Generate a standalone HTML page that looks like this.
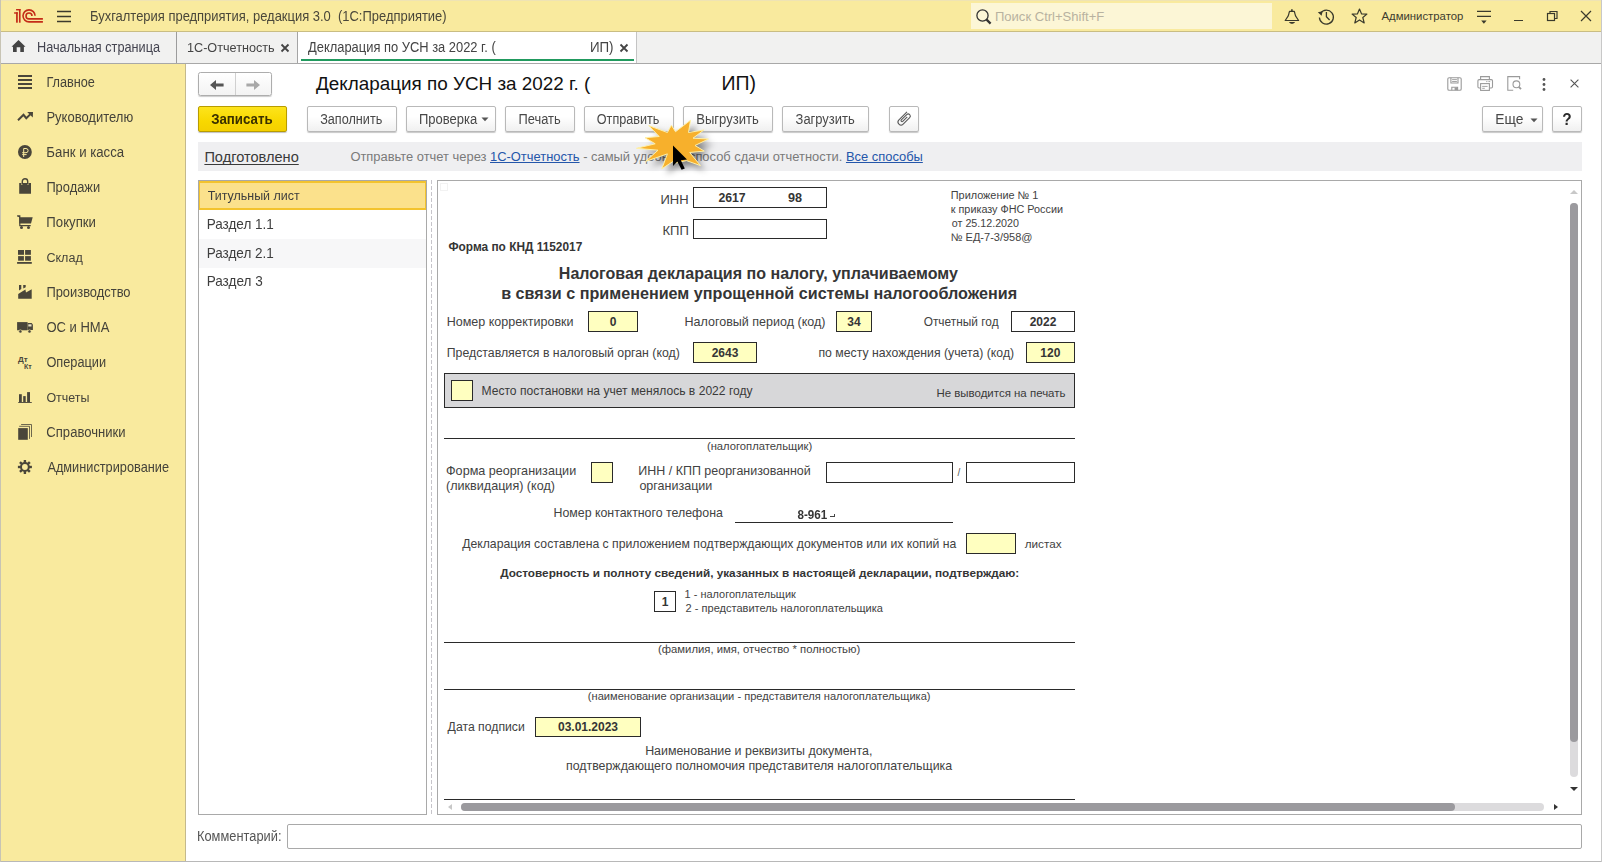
<!DOCTYPE html>
<html><head><meta charset="utf-8">
<style>
*{box-sizing:border-box;margin:0;padding:0}
html,body{width:1602px;height:862px;overflow:hidden;background:#fff;font-family:"Liberation Sans",sans-serif;color:#333}
.a{position:absolute}
.t{position:absolute;white-space:pre;line-height:1;font-family:"Liberation Sans",sans-serif}
svg.a{overflow:visible}
</style></head><body>
<div class="a" style="left:0px;top:0px;width:1602px;height:31px;background:#f9ea9e"></div>
<div class="a" style="left:0px;top:0px;width:1602px;height:1px;background:#efe3b4"></div>
<div class="a" style="left:0px;top:31px;width:1602px;height:1px;background:#c9bd83"></div>
<div class="a" style="left:0px;top:32px;width:1602px;height:31px;background:#f1f1f0"></div>
<div class="a" style="left:0px;top:63px;width:1602px;height:1px;background:#a8a8a8"></div>
<div class="a" style="left:0px;top:64px;width:185px;height:798px;background:#f9ea9e"></div>
<div class="a" style="left:185px;top:64px;width:1px;height:798px;background:#c4b98c"></div>
<div class="a" style="left:186px;top:64px;width:1415px;height:797px;background:#fff"></div>
<div class="a" style="left:0px;top:861px;width:1602px;height:1px;background:#b8b8b8"></div>
<div class="a" style="left:0px;top:0px;width:1px;height:862px;background:#c8c4b4"></div>
<div class="a" style="left:1601px;top:0px;width:1px;height:862px;background:#c8c8c8"></div>
<svg class="a" style="left:12px;top:6px;" width="34" height="20" viewBox="0 0 34 20"><g fill="#c42c18"><rect x="4.06" y="6.26" width="1.74" height="10.44"/><rect x="2.1" y="6.26" width="3.7" height="1.45"/><rect x="6.96" y="3" width="1.62" height="13.7"/><rect x="4.06" y="3" width="4.52" height="1.45"/></g>
<g fill="none" stroke="#c42c18" stroke-width="1.6"><path d="M23.06 9.87 A6.03 6.03 0 1 0 17.03 15.9 H30.9"/><path d="M19.97 9.93 A2.97 2.97 0 1 0 17 12.9 H30.9"/></g></svg>
<svg class="a" style="left:56px;top:10px;" width="16" height="13" viewBox="0 0 16 13"><g stroke="#3c3a2c" stroke-width="1.5"><path d="M1 1.5H15M1 6.5H15M1 11.5H15"/></g></svg>
<div class="t" style="left:90.00px;top:11.00px;font-size:12.968px;font-weight:400;color:#4a473a;transform:scaleY(1.08);transform-origin:0 10px;">Бухгалтерия предприятия, редакция 3.0  (1С:Предприятие)</div>
<div class="a" style="left:971px;top:3px;width:301px;height:26px;background:#fcf6d6"></div>
<svg class="a" style="left:975.3px;top:7.8px;" width="18" height="18" viewBox="0 0 18 18"><circle cx="7.5" cy="7.5" r="5.6" fill="none" stroke="#333" stroke-width="1.3"/><path d="M11.6 11.6 L15.6 15.6" stroke="#333" stroke-width="2.2"/></svg>
<div class="t" style="left:994.95px;top:10.00px;font-size:13.062px;font-weight:400;color:#b8b2a0;">Поиск Ctrl+Shift+F</div>
<svg class="a" style="left:1280px;top:5px;" width="24" height="22" viewBox="0 0 24 22"><path d="M11.9 4.2 V6.3" stroke="#3a3a2c" stroke-width="1.6"/><path d="M9.6 6.3 H14.2 C14.9 8 15.1 10 15.7 11.2 L18.6 15.5 H5.2 L8.1 11.2 C8.7 10 8.9 8 9.6 6.3Z" fill="none" stroke="#3a3a2c" stroke-width="1.2" stroke-linejoin="round"/><path d="M9 17 H15 C14.2 19.4 9.8 19.4 9 17Z" fill="#3a3a2c"/></svg>
<svg class="a" style="left:1317px;top:8px;" width="18" height="17" viewBox="0 0 18 17"><path d="M3.6 5.2 A7 7 0 1 1 2.4 9.5" fill="none" stroke="#3a3a2c" stroke-width="1.3"/><path d="M0.8 4.2 L5.6 3.2 L4.6 7.8Z" fill="#3a3a2c"/><path d="M9.4 4 V8.8 L12.6 12" fill="none" stroke="#3a3a2c" stroke-width="1.3"/></svg>
<svg class="a" style="left:1351px;top:8px;" width="17" height="16" viewBox="0 0 17 16"><path d="M8.5 1 L10.6 5.9 L15.9 6.1 L11.8 9.5 L13.2 14.9 L8.5 11.9 L3.8 14.9 L5.2 9.5 L1.1 6.1 L6.4 5.9Z" fill="none" stroke="#3a3a2c" stroke-width="1.2" stroke-linejoin="round"/></svg>
<div class="t" style="left:1381.50px;top:11.00px;font-size:11.354px;font-weight:400;color:#3e3c30;">Администратор</div>
<svg class="a" style="left:1476px;top:9px;" width="16" height="16" viewBox="0 0 16 16"><path d="M1 2.3H15M1 7.4H15" stroke="#3a3a2c" stroke-width="1.2"/><path d="M5.2 11.6H10.6L7.9 14.8Z" fill="#3a3a2c"/></svg>
<div class="a" style="left:1514px;top:20px;width:9px;height:1.3px;background:#3a3a2c"></div>
<svg class="a" style="left:1546px;top:10px;" width="13" height="12" viewBox="0 0 13 12"><rect x="1.5" y="3.5" width="7" height="7" fill="none" stroke="#3a3a2c" stroke-width="1.2"/><path d="M4 3.5 V1.5 H11 V8.5 H8.5" fill="none" stroke="#3a3a2c" stroke-width="1.2"/></svg>
<svg class="a" style="left:1580px;top:10px;" width="12" height="12" viewBox="0 0 12 12"><path d="M1 1L11 11M11 1L1 11" stroke="#3a3a2c" stroke-width="1.2"/></svg>
<svg class="a" style="left:11px;top:39px;" width="15" height="14" viewBox="0 0 15 14"><path d="M7.5 1 L14.5 7.7 H12.9 V13 H9.3 V8.3 H5.7 V13 H2 V7.7 H0.5Z" fill="#444"/></svg>
<div class="t" style="left:37.00px;top:42.00px;font-size:12.731px;font-weight:400;color:#444450;transform:scaleY(1.08);transform-origin:0 10px;">Начальная страница</div>
<div class="a" style="left:176px;top:32px;width:1px;height:31px;background:#9c9c9c"></div>
<div class="t" style="left:187.01px;top:42.00px;font-size:12.653px;font-weight:400;color:#444;transform:scaleY(1.08);transform-origin:0 10px;">1С-Отчетность</div>
<svg class="a" style="left:280px;top:43px;" width="10" height="10" viewBox="0 0 10 10"><path d="M1.5 1.5L8.5 8.5M8.5 1.5L1.5 8.5" stroke="#444" stroke-width="1.8"/></svg>
<div class="a" style="left:297px;top:32px;width:1px;height:31px;background:#a4a4a4"></div>
<div class="a" style="left:298px;top:32px;width:338px;height:31px;background:#fff"></div>
<div class="a" style="left:636px;top:32px;width:1px;height:31px;background:#c4c4c4"></div>
<div class="a" style="left:301px;top:59px;width:333px;height:2px;background:#219a5e"></div>
<div class="t" style="left:308.00px;top:42.00px;font-size:12.919px;font-weight:400;color:#444;transform:scaleY(1.08);transform-origin:0 10px;">Декларация по УСН за 2022 г. (</div>
<div class="t" style="left:589.96px;top:41.00px;font-size:13.340px;font-weight:400;color:#444;transform:scaleY(1.08);transform-origin:0 11px;">ИП)</div>
<svg class="a" style="left:619px;top:43px;" width="10" height="10" viewBox="0 0 10 10"><path d="M1.5 1.5L8.5 8.5M8.5 1.5L1.5 8.5" stroke="#444" stroke-width="1.8"/></svg>
<div class="t" style="left:46.40px;top:77.00px;font-size:12.696px;font-weight:400;color:#45433a;transform:scaleY(1.09);transform-origin:0 10px;">Главное</div>
<div class="t" style="left:46.38px;top:111.00px;font-size:13.023px;font-weight:400;color:#45433a;transform:scaleY(1.09);transform-origin:0 11px;">Руководителю</div>
<div class="t" style="left:46.36px;top:146.00px;font-size:13.232px;font-weight:400;color:#45433a;transform:scaleY(1.09);transform-origin:0 11px;">Банк и касса</div>
<div class="t" style="left:46.39px;top:182.00px;font-size:12.873px;font-weight:400;color:#45433a;transform:scaleY(1.09);transform-origin:0 10px;">Продажи</div>
<div class="t" style="left:46.37px;top:216.00px;font-size:13.193px;font-weight:400;color:#45433a;transform:scaleY(1.09);transform-origin:0 11px;">Покупки</div>
<div class="t" style="left:46.41px;top:252.00px;font-size:12.573px;font-weight:400;color:#45433a;transform:scaleY(1.09);transform-origin:0 10px;">Склад</div>
<div class="t" style="left:46.39px;top:287.00px;font-size:12.921px;font-weight:400;color:#45433a;transform:scaleY(1.09);transform-origin:0 10px;">Производство</div>
<div class="t" style="left:46.38px;top:321.00px;font-size:13.022px;font-weight:400;color:#45433a;transform:scaleY(1.09);transform-origin:0 11px;">ОС и НМА</div>
<div class="t" style="left:46.40px;top:357.00px;font-size:12.772px;font-weight:400;color:#45433a;transform:scaleY(1.09);transform-origin:0 10px;">Операции</div>
<div class="t" style="left:46.42px;top:392.00px;font-size:12.483px;font-weight:400;color:#45433a;transform:scaleY(1.09);transform-origin:0 10px;">Отчеты</div>
<div class="t" style="left:46.37px;top:426.00px;font-size:13.073px;font-weight:400;color:#45433a;transform:scaleY(1.09);transform-origin:0 11px;">Справочники</div>
<div class="t" style="left:47.40px;top:462.00px;font-size:12.750px;font-weight:400;color:#45433a;transform:scaleY(1.09);transform-origin:0 10px;">Администрирование</div>
<svg class="a" style="left:14px;top:70px;" width="24" height="24" viewBox="0 0 24 24"><g fill="#4a463a"><rect x="4" y="5" width="14" height="2"/><rect x="4" y="9" width="14" height="2"/><rect x="4" y="13" width="14" height="2"/><rect x="4" y="17" width="14" height="2"/></g></svg>
<svg class="a" style="left:14px;top:105px;" width="24" height="24" viewBox="0 0 24 24"><path d="M4 15.2 L9.5 9.8 L12.3 13.2 L16.2 9.4" fill="none" stroke="#4a463a" stroke-width="2"/><path d="M13.2 7 L19 7 L18.8 12.6Z" fill="#4a463a"/></svg>
<svg class="a" style="left:14px;top:140px;" width="24" height="24" viewBox="0 0 24 24"><circle cx="10.9" cy="12" r="6.9" fill="#4a463a"/><path d="M9.7 17 V8.5 H12 A2.1 2.1 0 0 1 12 12.7 H8.2 M8.2 14.6 H12.6" fill="none" stroke="#f9ea9e" stroke-width="1"/></svg>
<svg class="a" style="left:14px;top:175px;" width="24" height="24" viewBox="0 0 24 24"><path d="M5.2 8.1 H7.3 V10 H8.6 V8.1 H13.2 V10 H14.5 V8.1 H17 V18.7 H5.2Z" fill="#4a463a"/><path d="M8.3 9.5 V6.5 A2.6 2.6 0 0 1 13.7 6.5 V9.5" fill="none" stroke="#4a463a" stroke-width="1.4"/></svg>
<svg class="a" style="left:14px;top:210px;" width="24" height="24" viewBox="0 0 24 24"><path d="M3.1 5.9 H6 V7.2 H18.7 L17 13.6 H5.2 V7.2" fill="#4a463a"/><path d="M3.1 5.9 H5.8 V15.6 H16.7" fill="none" stroke="#4a463a" stroke-width="1.2"/><circle cx="7.5" cy="17.5" r="1.5" fill="#4a463a"/><circle cx="14.5" cy="17.5" r="1.5" fill="#4a463a"/></svg>
<svg class="a" style="left:14px;top:245px;" width="24" height="24" viewBox="0 0 24 24"><g fill="#4a463a"><rect x="4" y="5" width="6" height="4.8"/><rect x="11.1" y="5" width="5.8" height="4.8"/><rect x="4.1" y="11.1" width="5.8" height="4.6"/><rect x="11.1" y="11.1" width="5.8" height="4.6"/><rect x="3.1" y="17" width="14.7" height="1.8"/></g></svg>
<svg class="a" style="left:14px;top:280px;" width="24" height="24" viewBox="0 0 24 24"><path d="M4.2 13.9 L11.4 9.5 L12 12.5 L17.7 9.2 V18.7 H4.2Z" fill="#4a463a"/><path d="M5 5 H7.3 V9 L5 10.6Z M9.2 5 H11.7 V7.2 L9.3 8.6Z" fill="#4a463a"/></svg>
<svg class="a" style="left:14px;top:315px;" width="24" height="24" viewBox="0 0 24 24"><rect x="3.1" y="7.1" width="10.5" height="8.2" fill="#4a463a"/><path d="M13.6 8.1 H17.6 L18.9 9.6 V15 H13.6Z" fill="#4a463a"/><rect x="14.3" y="9.3" width="3.2" height="2.2" fill="#e8e2c4"/><circle cx="6.4" cy="16.4" r="1.6" fill="#4a463a" stroke="#f9ea9e" stroke-width=".6"/><circle cx="15.5" cy="16.4" r="1.6" fill="#4a463a" stroke="#f9ea9e" stroke-width=".6"/></svg>
<svg class="a" style="left:14px;top:350px;" width="24" height="24" viewBox="0 0 24 24"><text x="4" y="11.6" font-family="Liberation Sans" font-size="8" font-weight="700" fill="#4a463a">Дт</text><text x="10" y="18.9" font-family="Liberation Sans" font-size="7" font-weight="700" fill="#4a463a">Кт</text></svg>
<svg class="a" style="left:14px;top:385px;" width="24" height="24" viewBox="0 0 24 24"><g fill="#4a463a"><rect x="5" y="9.2" width="2.8" height="8"/><rect x="9.2" y="11.1" width="2.5" height="6"/><rect x="13.1" y="7.1" width="2.9" height="10"/><rect x="4.2" y="17" width="13.6" height="0.9"/></g></svg>
<svg class="a" style="left:14px;top:420px;" width="24" height="24" viewBox="0 0 24 24"><rect x="4.2" y="8.1" width="9.6" height="11.7" fill="#4a463a"/><path d="M5.2 6.3 H15.5 V18.9 M7.1 4.5 H17.5 V17" fill="none" stroke="#4a463a" stroke-width="0.8"/></svg>
<svg class="a" style="left:14px;top:455px;" width="24" height="24" viewBox="0 0 24 24"><g transform="translate(10.9 12)" fill="#4a463a"><circle r="4.9"/><rect x="-1.2" y="-7" width="2.4" height="3" transform="rotate(0)"/><rect x="-1.2" y="-7" width="2.4" height="3" transform="rotate(45)"/><rect x="-1.2" y="-7" width="2.4" height="3" transform="rotate(90)"/><rect x="-1.2" y="-7" width="2.4" height="3" transform="rotate(135)"/><rect x="-1.2" y="-7" width="2.4" height="3" transform="rotate(180)"/><rect x="-1.2" y="-7" width="2.4" height="3" transform="rotate(225)"/><rect x="-1.2" y="-7" width="2.4" height="3" transform="rotate(270)"/><rect x="-1.2" y="-7" width="2.4" height="3" transform="rotate(315)"/><circle r="2.9" fill="#f9ea9e"/></g></svg>
<div class="a" style="left:198px;top:72px;width:74px;height:24px;border:1px solid #adadad;border-radius:2.5px;background:linear-gradient(#fff,#f3f3f3);box-shadow:0 1px 1px rgba(0,0,0,.2)"></div>
<div class="a" style="left:235px;top:73px;width:1px;height:22px;background:#d0d0d0"></div>
<svg class="a" style="left:208px;top:77.7px;" width="18" height="14" viewBox="0 0 18 14"><path d="M2 7 L8 2 V5.4 H15.6 V8.6 H8 V12Z" fill="#555"/></svg>
<svg class="a" style="left:243.8px;top:77.7px;" width="18" height="14" viewBox="0 0 18 14"><path d="M16 7 L10 2 V5.4 H2.4 V8.6 H10 V12Z" fill="#a8a8a8"/></svg>
<div class="t" style="left:316.10px;top:75.00px;font-size:18.876px;font-weight:400;color:#111;">Декларация по УСН за 2022 г. (</div>
<div class="t" style="left:721.45px;top:74.00px;font-size:19.500px;font-weight:400;color:#111;">ИП)</div>
<svg class="a" style="left:1440px;top:70px;" width="90" height="28" viewBox="0 0 90 28"><g fill="none" stroke="#9a9a9a" stroke-width="1.1">
<rect x="7.8" y="7.8" width="13.4" height="12.4" rx="1.3"/>
<path d="M10.9 7.8 V13 H18 V7.8"/><path d="M12.1 9.6 H16.9 M12.1 11.5 H16.9" stroke-width="0.9"/>
<path d="M11.8 20.2 V17.3 H17.6 V20.2"/>
<path d="M40.6 9.3 V6.6 H49.4 V9.3"/>
<rect x="37.9" y="9.6" width="14.6" height="8.4" rx="1.2"/>
<rect x="40.6" y="13.6" width="8.8" height="6.8" fill="#fff"/>
<path d="M42.2 16.4 H47.6 M42.2 18.3 H44.8" stroke-width="0.9"/><path d="M46.2 11.6 H47.4 M48.4 11.6 H50.2" stroke-width="0.9"/>
<path d="M73.2 20.2 H67.8 V6.6 H79.6 V9.2"/>
<circle cx="76.4" cy="14.3" r="3.4"/>
</g><rect x="14.6" y="17.4" width="3" height="2.8" fill="#9a9a9a"/><path d="M78.8 16.8 L81 19.2" stroke="#9a9a9a" stroke-width="1.8"/></svg>
<svg class="a" style="left:1541px;top:77px;" width="6" height="16" viewBox="0 0 6 16"><circle cx="3" cy="2.5" r="1.4" fill="#555"/><circle cx="3" cy="7.5" r="1.4" fill="#555"/><circle cx="3" cy="12.5" r="1.4" fill="#555"/></svg>
<svg class="a" style="left:1569px;top:78px;" width="11" height="11" viewBox="0 0 11 11"><path d="M1.6 1.6L9.4 9.4M9.4 1.6L1.6 9.4" stroke="#555" stroke-width="1.1"/></svg>
<div class="a" style="left:198px;top:106px;width:89px;height:26px;border:1px solid #b89c00;border-radius:2px;background:linear-gradient(#fde41c,#f8d800 60%,#f4d000);box-shadow:0 1px 1px rgba(0,0,0,.25)"></div>
<div class="t" style="left:211.18px;top:113.00px;font-size:13.286px;font-weight:700;color:#3a3000;transform:scaleY(1.1);transform-origin:0 11px;">Записать</div>
<div class="a" style="left:307px;top:106px;width:90px;height:26px;border:1px solid #b9b9b9;border-radius:2px;background:linear-gradient(#fff 40%,#f0f0f0);box-shadow:0 1px 1px rgba(0,0,0,.22)"></div>
<div class="t" style="left:320.21px;top:114.00px;font-size:12.655px;font-weight:400;color:#484848;transform:scaleY(1.1);transform-origin:0 10px;">Заполнить</div>
<div class="a" style="left:406px;top:106px;width:90px;height:26px;border:1px solid #b9b9b9;border-radius:2px;background:linear-gradient(#fff 40%,#f0f0f0);box-shadow:0 1px 1px rgba(0,0,0,.22)"></div>
<div class="t" style="left:418.98px;top:113.00px;font-size:13.029px;font-weight:400;color:#484848;transform:scaleY(1.1);transform-origin:0 11px;">Проверка</div>
<div class="a" style="left:505px;top:106px;width:70px;height:26px;border:1px solid #b9b9b9;border-radius:2px;background:linear-gradient(#fff 40%,#f0f0f0);box-shadow:0 1px 1px rgba(0,0,0,.22)"></div>
<div class="t" style="left:518.50px;top:114.00px;font-size:12.862px;font-weight:400;color:#484848;transform:scaleY(1.1);transform-origin:0 10px;">Печать</div>
<div class="a" style="left:584px;top:106px;width:90px;height:26px;border:1px solid #b9b9b9;border-radius:2px;background:linear-gradient(#fff 40%,#f0f0f0);box-shadow:0 1px 1px rgba(0,0,0,.22)"></div>
<div class="t" style="left:596.81px;top:114.00px;font-size:12.635px;font-weight:400;color:#484848;transform:scaleY(1.1);transform-origin:0 10px;">Отправить</div>
<div class="a" style="left:683px;top:106px;width:90px;height:26px;border:1px solid #b9b9b9;border-radius:2px;background:linear-gradient(#fff 40%,#f0f0f0);box-shadow:0 1px 1px rgba(0,0,0,.22)"></div>
<div class="t" style="left:696.28px;top:113.00px;font-size:13.056px;font-weight:400;color:#484848;transform:scaleY(1.1);transform-origin:0 11px;">Выгрузить</div>
<div class="a" style="left:782px;top:106px;width:87px;height:26px;border:1px solid #b9b9b9;border-radius:2px;background:linear-gradient(#fff 40%,#f0f0f0);box-shadow:0 1px 1px rgba(0,0,0,.22)"></div>
<div class="t" style="left:795.59px;top:114.00px;font-size:12.957px;font-weight:400;color:#484848;transform:scaleY(1.1);transform-origin:0 10px;">Загрузить</div>
<svg class="a" style="left:481px;top:117px;" width="8" height="5" viewBox="0 0 8 5"><path d="M0.5 0.5H7.5L4 4.2Z" fill="#555"/></svg>
<div class="a" style="left:889px;top:106px;width:30px;height:26px;border:1px solid #b9b9b9;border-radius:2px;background:linear-gradient(#fff 40%,#f0f0f0);box-shadow:0 1px 1px rgba(0,0,0,.22)"></div>
<svg class="a" style="left:886px;top:102px;" width="36" height="34" viewBox="0 0 36 34"><g transform="translate(18.3 16.7) rotate(-45)"><path d="M6.8 -3 H-4.6 A3 3 0 0 0 -4.6 3 H4.6 A2.1 2.1 0 0 0 4.6 -1.2 H-3 A1 1 0 0 0 -3 0.8 H3.4" fill="none" stroke="#5a5a5a" stroke-width="1.1"/></g></svg>
<div class="a" style="left:1482px;top:106px;width:61px;height:26px;border:1px solid #b9b9b9;border-radius:2px;background:linear-gradient(#fff 40%,#f0f0f0);box-shadow:0 1px 1px rgba(0,0,0,.22)"></div>
<div class="t" style="left:1495.22px;top:113.00px;font-size:13.824px;font-weight:400;color:#484848;transform:scaleY(1.1);transform-origin:0 11px;">Еще</div>
<svg class="a" style="left:1529.5px;top:117.5px;" width="8" height="5" viewBox="0 0 8 5"><path d="M0.5 0.5H7.5L4 4.2Z" fill="#555"/></svg>
<div class="a" style="left:1552px;top:106px;width:30px;height:26px;border:1px solid #b9b9b9;border-radius:2px;background:linear-gradient(#fff 40%,#f0f0f0);box-shadow:0 1px 1px rgba(0,0,0,.22)"></div>
<div class="t" style="left:1562.20px;top:112.00px;font-size:15.400px;font-weight:700;color:#2a2a2a;transform:scaleY(1.12);transform-origin:0 13px;">?</div>
<div class="a" style="left:198px;top:142px;width:1384px;height:29px;background:#efeff1"></div>
<div class="t" style="left:204.40px;top:150.00px;font-size:14.581px;font-weight:400;color:#3a3a3a;text-decoration:underline;text-underline-offset:2px;text-decoration-skip-ink:none">Подготовлено</div>
<div class="t" style="left:350.39px;top:151.00px;font-size:12.927px;font-weight:400;color:#7a7a7a;">Отправьте отчет через <span style="color:#2456aa;text-decoration:underline">1С-Отчетность</span> - самый удобный способ сдачи отчетности. <span style="color:#2456aa;text-decoration:underline">Все способы</span></div>
<div class="a" style="left:198px;top:180px;width:229px;height:635px;border:1px solid #a9a9a9;background:#fff"></div>
<div class="a" style="left:199px;top:181px;width:227px;height:29px;background:#fbe18c;border:1px solid #f3c32e;border-top-width:2px;border-bottom-width:2px"></div>
<div class="a" style="left:199px;top:239px;width:227px;height:29px;background:#f7f7f8"></div>
<div class="t" style="left:207.70px;top:190.00px;font-size:12.460px;font-weight:400;color:#3e3e3e;transform:scaleY(1.09);transform-origin:0 10px;">Титульный лист</div>
<div class="t" style="left:206.64px;top:218.00px;font-size:13.523px;font-weight:400;color:#3e3e3e;transform:scaleY(1.09);transform-origin:0 11px;">Раздел 1.1</div>
<div class="t" style="left:206.64px;top:247.00px;font-size:13.523px;font-weight:400;color:#3e3e3e;transform:scaleY(1.09);transform-origin:0 11px;">Раздел 2.1</div>
<div class="t" style="left:206.64px;top:275.00px;font-size:13.553px;font-weight:400;color:#3e3e3e;transform:scaleY(1.09);transform-origin:0 11px;">Раздел 3</div>
<div class="a" style="left:431px;top:180px;width:1px;height:635px;background:repeating-linear-gradient(#c6c4ca 0 4px,transparent 4px 6px)"></div>
<div class="t" style="left:196.99px;top:831.00px;font-size:12.855px;font-weight:400;color:#555;transform:scaleY(1.08);transform-origin:0 10px;">Комментарий:</div>
<div class="a" style="left:287px;top:824px;width:1295px;height:25px;border:1px solid #a9a9a9;border-radius:2px;background:#fff"></div>
<div class="a" style="left:437px;top:180px;width:1145px;height:635px;border:1px solid #a9a9a9;background:#fff"></div>
<div class="a" style="left:440px;top:183px;width:8px;height:8px;border:1px solid #f2f2f2"></div>
<div class="t" style="left:660.42px;top:193.00px;font-size:13.000px;font-weight:400;color:#424242;">ИНН</div>
<div class="a" style="left:693px;top:187px;width:134px;height:21px;border:1.5px solid #2a2a2a;background:#fff"></div>
<div class="t" style="left:718.40px;top:192.00px;font-size:12.277px;font-weight:700;color:#353535;">2617</div>
<div class="t" style="left:788.00px;top:192.00px;font-size:12.646px;font-weight:700;color:#353535;">98</div>
<div class="t" style="left:662.41px;top:224.00px;font-size:13.091px;font-weight:400;color:#424242;">КПП</div>
<div class="a" style="left:693px;top:218.5px;width:134px;height:20.0px;border:1.5px solid #2a2a2a;background:#fff"></div>
<div class="t" style="left:448.50px;top:242.00px;font-size:11.867px;font-weight:700;color:#353535;">Форма по КНД 1152017</div>
<div class="t" style="left:950.78px;top:190.00px;font-size:10.886px;font-weight:400;color:#424242;">Приложение № 1</div>
<div class="t" style="left:950.79px;top:204.00px;font-size:10.827px;font-weight:400;color:#424242;">к приказу ФНС России</div>
<div class="t" style="left:951.80px;top:218.00px;font-size:10.718px;font-weight:400;color:#424242;">от 25.12.2020</div>
<div class="t" style="left:950.77px;top:232.00px;font-size:10.998px;font-weight:400;color:#424242;">№ ЕД-7-3/958@</div>
<div class="t" style="left:558.80px;top:265.00px;font-size:16.069px;font-weight:700;color:#353535;">Налоговая декларация по налогу, уплачиваемому</div>
<div class="t" style="left:501.19px;top:285.00px;font-size:16.160px;font-weight:700;color:#353535;">в связи с применением упрощенной системы налогообложения</div>
<div class="t" style="left:446.76px;top:316.00px;font-size:12.530px;font-weight:400;color:#424242;">Номер корректировки</div>
<div class="a" style="left:588px;top:311px;width:50px;height:20.5px;border:1.5px solid #2a2a2a;background:#ffffc0"></div>
<div class="t" style="left:588px;width:50px;text-align:center;top:315.64px;font-size:12px;font-weight:700;color:#353535">0</div>
<div class="t" style="left:684.45px;top:316.00px;font-size:12.541px;font-weight:400;color:#424242;">Налоговый период (код)</div>
<div class="a" style="left:836px;top:311px;width:36px;height:20.5px;border:1.5px solid #2a2a2a;background:#ffffc0"></div>
<div class="t" style="left:836px;width:36px;text-align:center;top:315.64px;font-size:12px;font-weight:700;color:#353535">34</div>
<div class="t" style="left:923.70px;top:317.00px;font-size:11.889px;font-weight:400;color:#424242;">Отчетный год</div>
<div class="a" style="left:1011px;top:311px;width:64px;height:20.5px;border:1.5px solid #2a2a2a;background:#fff"></div>
<div class="t" style="left:1011px;width:64px;text-align:center;top:315.64px;font-size:12px;font-weight:700;color:#353535">2022</div>
<div class="t" style="left:446.77px;top:347.00px;font-size:12.303px;font-weight:400;color:#424242;">Представляется в налоговый орган (код)</div>
<div class="a" style="left:693px;top:342px;width:64px;height:20.5px;border:1.5px solid #2a2a2a;background:#ffffc0"></div>
<div class="t" style="left:693px;width:64px;text-align:center;top:346.64px;font-size:12px;font-weight:700;color:#353535">2643</div>
<div class="t" style="left:818.48px;top:347.00px;font-size:12.265px;font-weight:400;color:#424242;">по месту нахождения (учета) (код)</div>
<div class="a" style="left:1025.7px;top:342px;width:49.299999999999955px;height:20.5px;border:1.5px solid #2a2a2a;background:#ffffc0"></div>
<div class="t" style="left:1025.7px;width:49.299999999999955px;text-align:center;top:346.64px;font-size:12px;font-weight:700;color:#353535">120</div>
<div class="a" style="left:444px;top:373px;width:631px;height:35px;border:1.5px solid #2a2a2a;background:#d7d7d9"></div>
<div class="a" style="left:451px;top:380px;width:22px;height:21px;border:1.5px solid #2a2a2a;background:#ffffc0"></div>
<div class="t" style="left:481.49px;top:385.00px;font-size:12.103px;font-weight:400;color:#3a3a3a;">Место постановки на учет менялось в 2022 году</div>
<div class="t" style="left:936.42px;top:388.00px;font-size:11.484px;font-weight:400;color:#3a3a3a;">Не выводится на печать</div>
<div class="a" style="left:444px;top:438px;width:631px;height:1px;background:#2a2a2a"></div>
<div class="t" style="left:706.95px;top:441.00px;font-size:11.225px;font-weight:400;color:#424242;">(налогоплательщик)</div>
<div class="t" style="left:446.05px;top:465.00px;font-size:12.600px;font-weight:400;color:#424242;">Форма реорганизации</div>
<div class="t" style="left:446.05px;top:480.00px;font-size:12.588px;font-weight:400;color:#424242;">(ликвидация) (код)</div>
<div class="a" style="left:591px;top:462px;width:22px;height:20.5px;border:1.5px solid #2a2a2a;background:#ffffc0"></div>
<div class="t" style="left:638.36px;top:465.00px;font-size:12.483px;font-weight:400;color:#424242;">ИНН / КПП реорганизованной</div>
<div class="t" style="left:639.40px;top:480.00px;font-size:12.522px;font-weight:400;color:#424242;">организации</div>
<div class="a" style="left:826px;top:462px;width:127px;height:20.5px;border:1.5px solid #2a2a2a;background:#fff"></div>
<div class="t" style="left:957.50px;top:468.00px;font-size:10.000px;font-weight:400;color:#555;">/</div>
<div class="a" style="left:966px;top:462px;width:109px;height:20.5px;border:1.5px solid #2a2a2a;background:#fff"></div>
<div class="t" style="left:553.47px;top:507.00px;font-size:12.368px;font-weight:400;color:#424242;">Номер контактного телефона</div>
<div class="t" style="left:797.50px;top:509.00px;font-size:11.613px;font-weight:700;color:#353535;transform:scaleY(1.1);transform-origin:0 10px;">8-961</div>
<div class="a" style="left:829.5px;top:516px;width:5px;height:1.2px;background:#444"></div>
<div class="a" style="left:833.6px;top:513.5px;width:1.2px;height:3.5px;background:#444"></div>
<div class="a" style="left:735px;top:522px;width:218px;height:1px;background:#2a2a2a"></div>
<div class="t" style="left:462.20px;top:538.00px;font-size:12.228px;font-weight:400;color:#424242;">Декларация составлена с приложением подтверждающих документов или их копий на</div>
<div class="a" style="left:966px;top:533px;width:50px;height:21px;border:1.5px solid #2a2a2a;background:#ffffc0"></div>
<div class="t" style="left:1024.70px;top:538.00px;font-size:11.716px;font-weight:400;color:#424242;">листах</div>
<div class="t" style="left:500.20px;top:567.00px;font-size:11.762px;font-weight:700;color:#353535;">Достоверность и полноту сведений, указанных в настоящей декларации, подтверждаю:</div>
<div class="a" style="left:654px;top:591px;width:22px;height:21px;border:1.5px solid #2a2a2a;background:#fff"></div>
<div class="t" style="left:654px;width:22px;text-align:center;top:595.64px;font-size:12px;font-weight:700;color:#353535">1</div>
<div class="t" style="left:684.57px;top:589.00px;font-size:10.969px;font-weight:400;color:#424242;">1 - налогоплательщик</div>
<div class="t" style="left:685.60px;top:603.00px;font-size:11.044px;font-weight:400;color:#424242;">2 - представитель налогоплательщика</div>
<div class="a" style="left:444px;top:642px;width:631px;height:1px;background:#2a2a2a"></div>
<div class="t" style="left:658.04px;top:644.00px;font-size:11.293px;font-weight:400;color:#424242;">(фамилия, имя, отчество * полностью)</div>
<div class="a" style="left:444px;top:689px;width:631px;height:1px;background:#2a2a2a"></div>
<div class="t" style="left:587.86px;top:691.00px;font-size:11.103px;font-weight:400;color:#424242;">(наименование организации - представителя налогоплательщика)</div>
<div class="t" style="left:447.60px;top:721.00px;font-size:12.240px;font-weight:400;color:#424242;">Дата подписи</div>
<div class="a" style="left:535px;top:716.5px;width:106px;height:20.0px;border:1.5px solid #2a2a2a;background:#ffffc0"></div>
<div class="t" style="left:535px;width:106px;text-align:center;top:720.84px;font-size:12px;font-weight:700;color:#353535">03.01.2023</div>
<div class="t" style="left:645.16px;top:745.00px;font-size:12.429px;font-weight:400;color:#424242;">Наименование и реквизиты документа,</div>
<div class="t" style="left:565.97px;top:760.00px;font-size:12.383px;font-weight:400;color:#424242;">подтверждающего полномочия представителя налогоплательщика</div>
<div class="a" style="left:444px;top:799px;width:631px;height:1px;background:#2a2a2a"></div>
<div class="a" style="left:461px;top:803px;width:1083px;height:8px;background:#dcdbdd;border-radius:4px"></div>
<div class="a" style="left:461px;top:803px;width:994px;height:8px;background:#9b9a9e;border-radius:4px"></div>
<svg class="a" style="left:446px;top:803px;" width="8" height="8" viewBox="0 0 8 8"><path d="M6 1 V7 L2 4Z" fill="#c8c8c8"/></svg>
<svg class="a" style="left:1552px;top:803px;" width="8" height="8" viewBox="0 0 8 8"><path d="M2 1 V7 L6 4Z" fill="#333"/></svg>
<div class="a" style="left:1570px;top:203px;width:8px;height:574px;background:#dcdbdd;border-radius:4px"></div>
<div class="a" style="left:1570px;top:203px;width:8px;height:539px;background:#9b9a9e;border-radius:4px"></div>
<svg class="a" style="left:1569px;top:188px;" width="10" height="8" viewBox="0 0 10 8"><path d="M1 6 H9 L5 2Z" fill="#c8c8c8"/></svg>
<svg class="a" style="left:1569px;top:785px;" width="10" height="8" viewBox="0 0 10 8"><path d="M1 2 H9 L5 6Z" fill="#333"/></svg>
<svg class="a" style="left:0;top:0" width="1602" height="862"><defs><filter id="sh" x="-50%" y="-50%" width="200%" height="200%"><feGaussianBlur stdDeviation="3"/></filter></defs><polygon points="690.5,120.3 688.5,132.5 703.9,130 693,138.2 708.4,139 695,145.5 704.3,151.1 689.7,152.5 700.5,165.6 686.4,160.6 676,163 672.5,161.8 661.8,168.8 667.4,153.9 645.6,161.4 658,150.2 636.5,148.3 655.2,143.8 645,137.7 659.2,136.5 648.7,125.6 667.4,132.5 671.4,125.2 675.5,131.7" fill="rgba(0,0,0,.45)" transform="translate(5 5)" filter="url(#sh)"/><polygon points="690.5,120.3 688.5,132.5 703.9,130 693,138.2 708.4,139 695,145.5 704.3,151.1 689.7,152.5 700.5,165.6 686.4,160.6 676,163 672.5,161.8 661.8,168.8 667.4,153.9 645.6,161.4 658,150.2 636.5,148.3 655.2,143.8 645,137.7 659.2,136.5 648.7,125.6 667.4,132.5 671.4,125.2 675.5,131.7" fill="#f7b02c" stroke="#fff1a8" stroke-width="1" stroke-linejoin="miter"/><path d="M673 145.6 L673 166 L677.3 161.6 L681.6 169.7 L684.8 168.6 L680.8 160.2 L687 159.5Z" fill="#000"/></svg>
</body></html>
